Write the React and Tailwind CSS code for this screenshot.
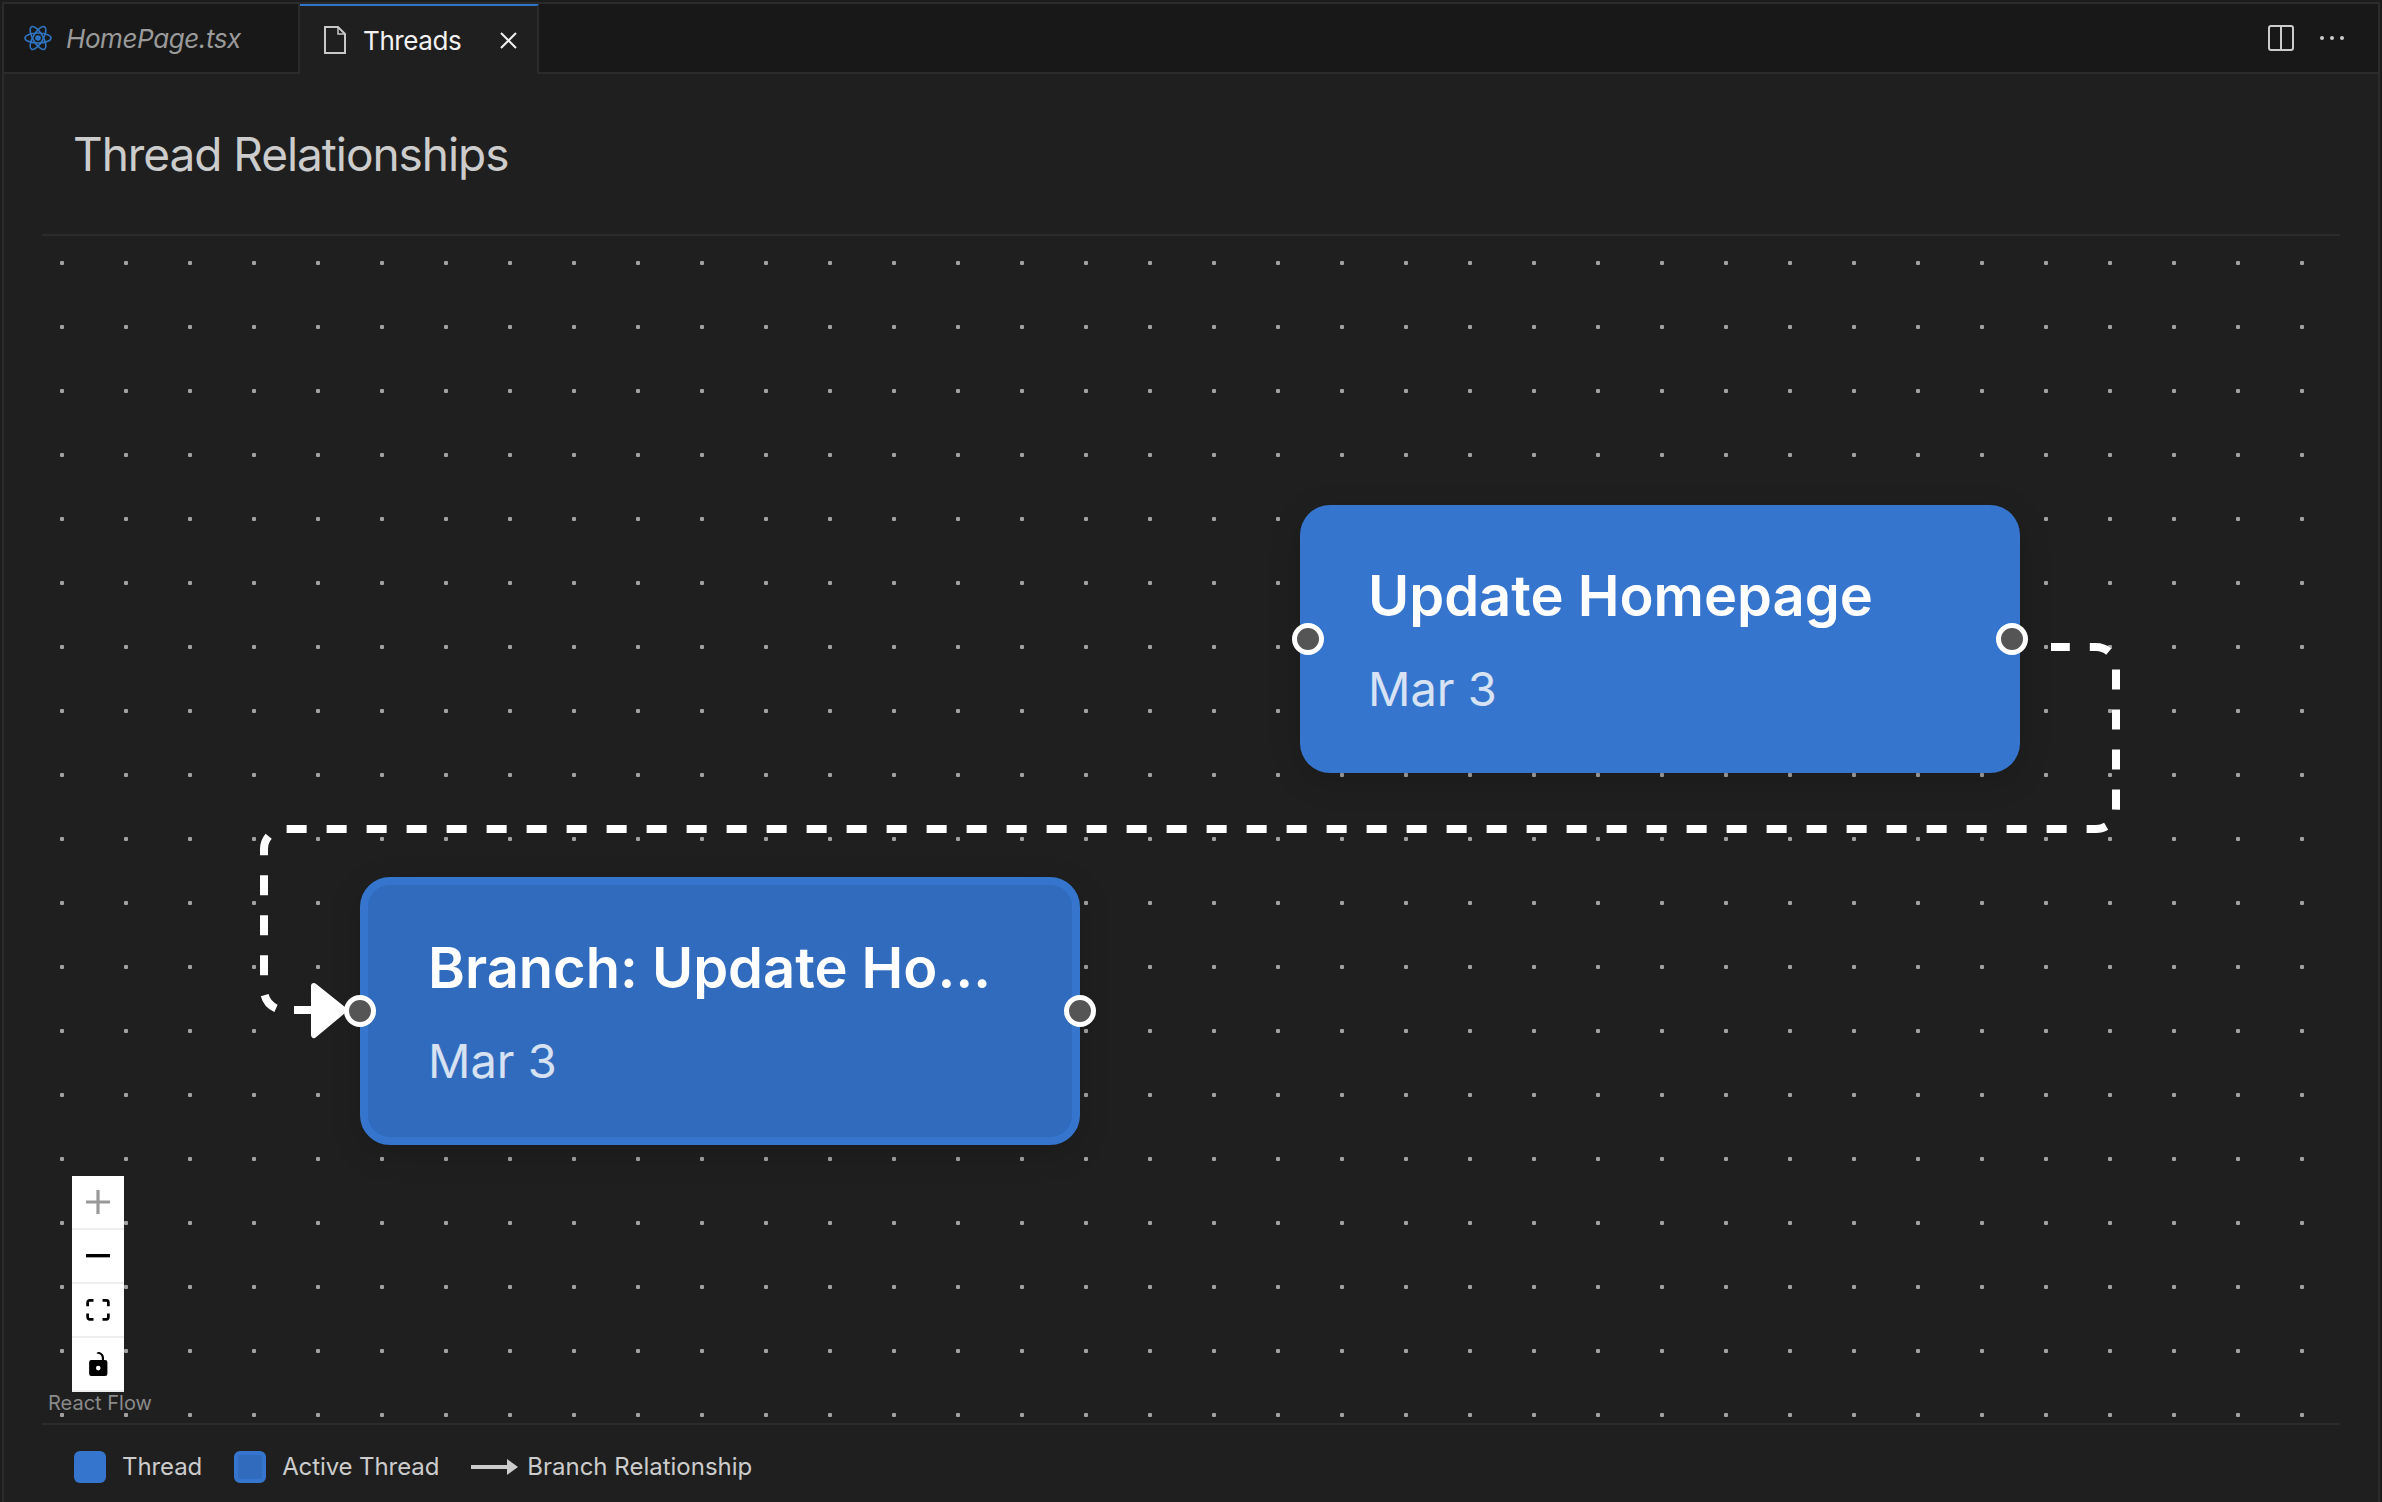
const font = { fontFamily: '"Inter", "Noto Sans", sans-serif' };

function ReactIcon() {
  return (
    <svg width="28" height="26" viewBox="0 0 28 26" fill="none" stroke="#2f74c0" strokeWidth="1.6">
      <ellipse cx="14" cy="13" rx="13" ry="5" />
      <ellipse cx="14" cy="13" rx="13" ry="5" transform="rotate(60 14 13)" />
      <ellipse cx="14" cy="13" rx="13" ry="5" transform="rotate(120 14 13)" />
      <circle cx="14" cy="13" r="2.8" fill="#2f74c0" stroke="none" />
    </svg>
  );
}

function FileIcon() {
  return (
    <svg width="22" height="28" viewBox="0 0 22 28" fill="none" stroke="#c8c8c8" strokeWidth="2">
      <path d="M1 1h13l7 7v19H1z" />
      <path d="M14 1v7h7" strokeWidth="1.5" />
    </svg>
  );
}

function CloseIcon() {
  return (
    <svg width="17" height="17" viewBox="0 0 17 17" stroke="#f0f0f0" strokeWidth="2" fill="none">
      <path d="M1 1l15 15M16 1L1 16" />
    </svg>
  );
}

function SplitIcon() {
  return (
    <svg width="26" height="26" viewBox="0 0 26 26" fill="none" stroke="#cccccc" strokeWidth="2">
      <rect x="1" y="1" width="24" height="24" rx="2" />
      <path d="M13 1v24" />
    </svg>
  );
}

function Tabs() {
  return (
    <div className="flex h-[70px] items-stretch">
      <div className="flex w-[296px] items-center border-r-2 border-b-2 border-[#2b2b2b] bg-[#181818] pl-[20px]">
        <ReactIcon />
        <span className="ml-[14px] text-[26px] italic tracking-[-0.4px] text-[#9a9a9a]">HomePage.tsx</span>
      </div>
      <div className="flex w-[239px] items-center border-t-2 border-r-2 border-t-[#2f74c9] border-r-[#2b2b2b] bg-[#1f1f1f] pl-[24px]">
        <FileIcon />
        <span className="ml-[17px] text-[26px] tracking-[-0.4px] text-[#f2f2f2]">Threads</span>
        <span className="ml-[39px] flex"><CloseIcon /></span>
      </div>
      <div className="flex flex-1 items-center justify-end border-b-2 border-[#2b2b2b] bg-[#181818] pr-[34px]">
        <SplitIcon />
        <div className="ml-[26px] flex gap-[6px]">
          <span className="h-[4px] w-[4px] rounded-full bg-[#cccccc]" />
          <span className="h-[4px] w-[4px] rounded-full bg-[#cccccc]" />
          <span className="h-[4px] w-[4px] rounded-full bg-[#cccccc]" />
        </div>
      </div>
    </div>
  );
}

function Handle({ className }) {
  return (
    <span className={`absolute h-[32px] w-[32px] rounded-full border-[5px] border-white bg-[#555555] ${className}`} />
  );
}

function FlowNode({ title, className, children }) {
  return (
    <div className={`absolute flex h-[268px] w-[720px] flex-col rounded-[30px] shadow-[0_8px_32px_rgba(0,0,0,0.15)] ${className}`}>
      <div className="truncate text-[56px] font-semibold leading-[68px] text-white">{title}</div>
      <div className="mt-[31px] text-[47px] leading-[56px] text-white/80">Mar 3</div>
      {children}
    </div>
  );
}

function ControlButton({ children }) {
  return (
    <div className="flex h-[54px] items-center justify-center border-b-2 border-[#eeeeee] bg-white">
      {children}
    </div>
  );
}

function Controls() {
  return (
    <div className="absolute left-[30px] top-[940px] w-[52px]">
      <ControlButton>
        <svg width="24" height="24" viewBox="0 0 32 32" fill="#999999">
          <path d="M32 18.133H18.133V32h-4.266V18.133H0v-4.266h13.867V0h4.266v13.867H32z" />
        </svg>
      </ControlButton>
      <ControlButton>
        <svg width="24" height="4" viewBox="0 0 32 5" preserveAspectRatio="none" fill="#000000">
          <path d="M0 0h32v4.2H0z" />
        </svg>
      </ControlButton>
      <ControlButton>
        <svg width="24" height="22" viewBox="0 0 32 30" fill="#000000">
          <path d="M3.692 4.63c0-.53.4-.938.939-.938h5.215V0H4.708C2.13 0 0 2.054 0 4.63v5.216h3.692V4.631zM27.354 0h-5.2v3.692h5.17c.53 0 .984.4.984.939v5.215H32V4.631A4.624 4.624 0 0027.354 0zm.954 24.83c0 .532-.4.94-.939.94h-5.215v3.768h5.215c2.577 0 4.631-2.13 4.631-4.707v-5.139h-3.692v5.139zm-23.677.94c-.531 0-.939-.4-.939-.94v-5.138H0v5.139c0 2.577 2.13 4.707 4.708 4.707h5.138V25.77H4.631z" />
        </svg>
      </ControlButton>
      <ControlButton>
        <svg width="19" height="24" viewBox="0 0 25 32" fill="#000000">
          <path d="M21.333 10.667H19.81V7.619C19.81 3.429 16.38 0 12.19 0c-4.114 1.828-1.37 2.133.305 2.438 1.676.305 4.42 2.59 4.42 5.181v3.048H3.047A3.056 3.056 0 000 13.714v15.238A3.056 3.056 0 003.048 32h18.285a3.056 3.056 0 003.048-3.048V13.714a3.056 3.056 0 00-3.048-3.047zM12.19 24.533a3.056 3.056 0 01-3.047-3.047 3.056 3.056 0 013.047-3.048 3.056 3.056 0 013.048 3.048 3.056 3.056 0 01-3.048 3.047z" />
        </svg>
      </ControlButton>
    </div>
  );
}

function Canvas() {
  return (
    <div className="relative flex-1 bg-[radial-gradient(circle,#a0a0a0_2px,transparent_2.5px)] bg-[size:64px_64px] bg-[position:-12px_-5px]">
      <svg className="absolute inset-0 h-full w-full" viewBox="42 236 2298 1187" fill="none">
        <path
          d="M2051 647H2096A20 20 0 0 1 2116 667V809A20 20 0 0 1 2096 829H284A20 20 0 0 0 264 849V990A20 20 0 0 0 276 1008.3"
          stroke="#ffffff"
          strokeWidth="8"
          strokeDasharray="20 20"
          strokeDashoffset="1.2"
        />
        <path d="M294 1010H314" stroke="#ffffff" strokeWidth="8" />
        <path d="M314 986L344 1010L314 1035z" fill="#ffffff" stroke="#ffffff" strokeWidth="6" strokeLinejoin="round" />
      </svg>
      <FlowNode title="Update Homepage" className="left-[1258px] top-[269px] bg-[#3575cd] pl-[68px] pr-[64px] pt-[57px]">
        <Handle className="left-[-8px] top-[118px]" />
        <Handle className="right-[-8px] top-[118px]" />
      </FlowNode>
      <FlowNode title="Branch: Update Homepage" className="left-[318px] top-[641px] border-[8px] border-[#3575cd] bg-[#306bbd] pl-[60px] pr-[64px] pt-[49px]">
        <Handle className="left-[-24px] top-[110px]" />
        <Handle className="right-[-24px] top-[110px]" />
      </FlowNode>
      <Controls />
      <div className="absolute left-[6px] top-[1155px] text-[20px] leading-[24px] text-[#8a8a8a]">React Flow</div>
    </div>
  );
}

function Legend() {
  return (
    <div className="flex h-[79px] items-center border-t-2 border-[#2b2b2b] pl-[32px] pt-[7px] text-[24px] text-[#cccccc]">
      <span className="h-[32px] w-[32px] rounded-[6px] bg-[#3575cd]" />
      <span className="ml-[16px] tracking-[-0.1px]">Thread</span>
      <span className="ml-[32px] h-[32px] w-[32px] rounded-[6px] border-[4px] border-[#3575cd] bg-[#306bbd]" />
      <span className="ml-[16px] tracking-[-0.1px]">Active Thread</span>
      <svg className="ml-[32px]" width="47" height="16" viewBox="0 0 47 16" fill="#cccccc">
        <path d="M0 6h36v4H0z" />
        <path d="M36 0l11 8-11 8z" />
      </svg>
      <span className="ml-[9px]">Branch Relationship</span>
    </div>
  );
}

export default function App() {
  return (
    <div className="h-[1502px] w-[2382px] overflow-hidden bg-[#1c1c1c] pl-[2px] pr-[2px] pt-[2px] antialiased" style={font}>
      <div className="flex h-full flex-col border-l-2 border-r-2 border-t-2 border-[#2b2b2b] bg-[#1f1f1f]">
        <Tabs />
        <div className="mx-[38px] flex h-[162px] items-center border-b-2 border-[#2b2b2b] pl-[31px]">
          <h1 className="text-[46px] font-normal tracking-[-1.05px] text-[#cccccc]">Thread Relationships</h1>
        </div>
        <div className="mx-[38px] flex flex-1 flex-col">
          <Canvas />
          <Legend />
        </div>
      </div>
    </div>
  );
}
